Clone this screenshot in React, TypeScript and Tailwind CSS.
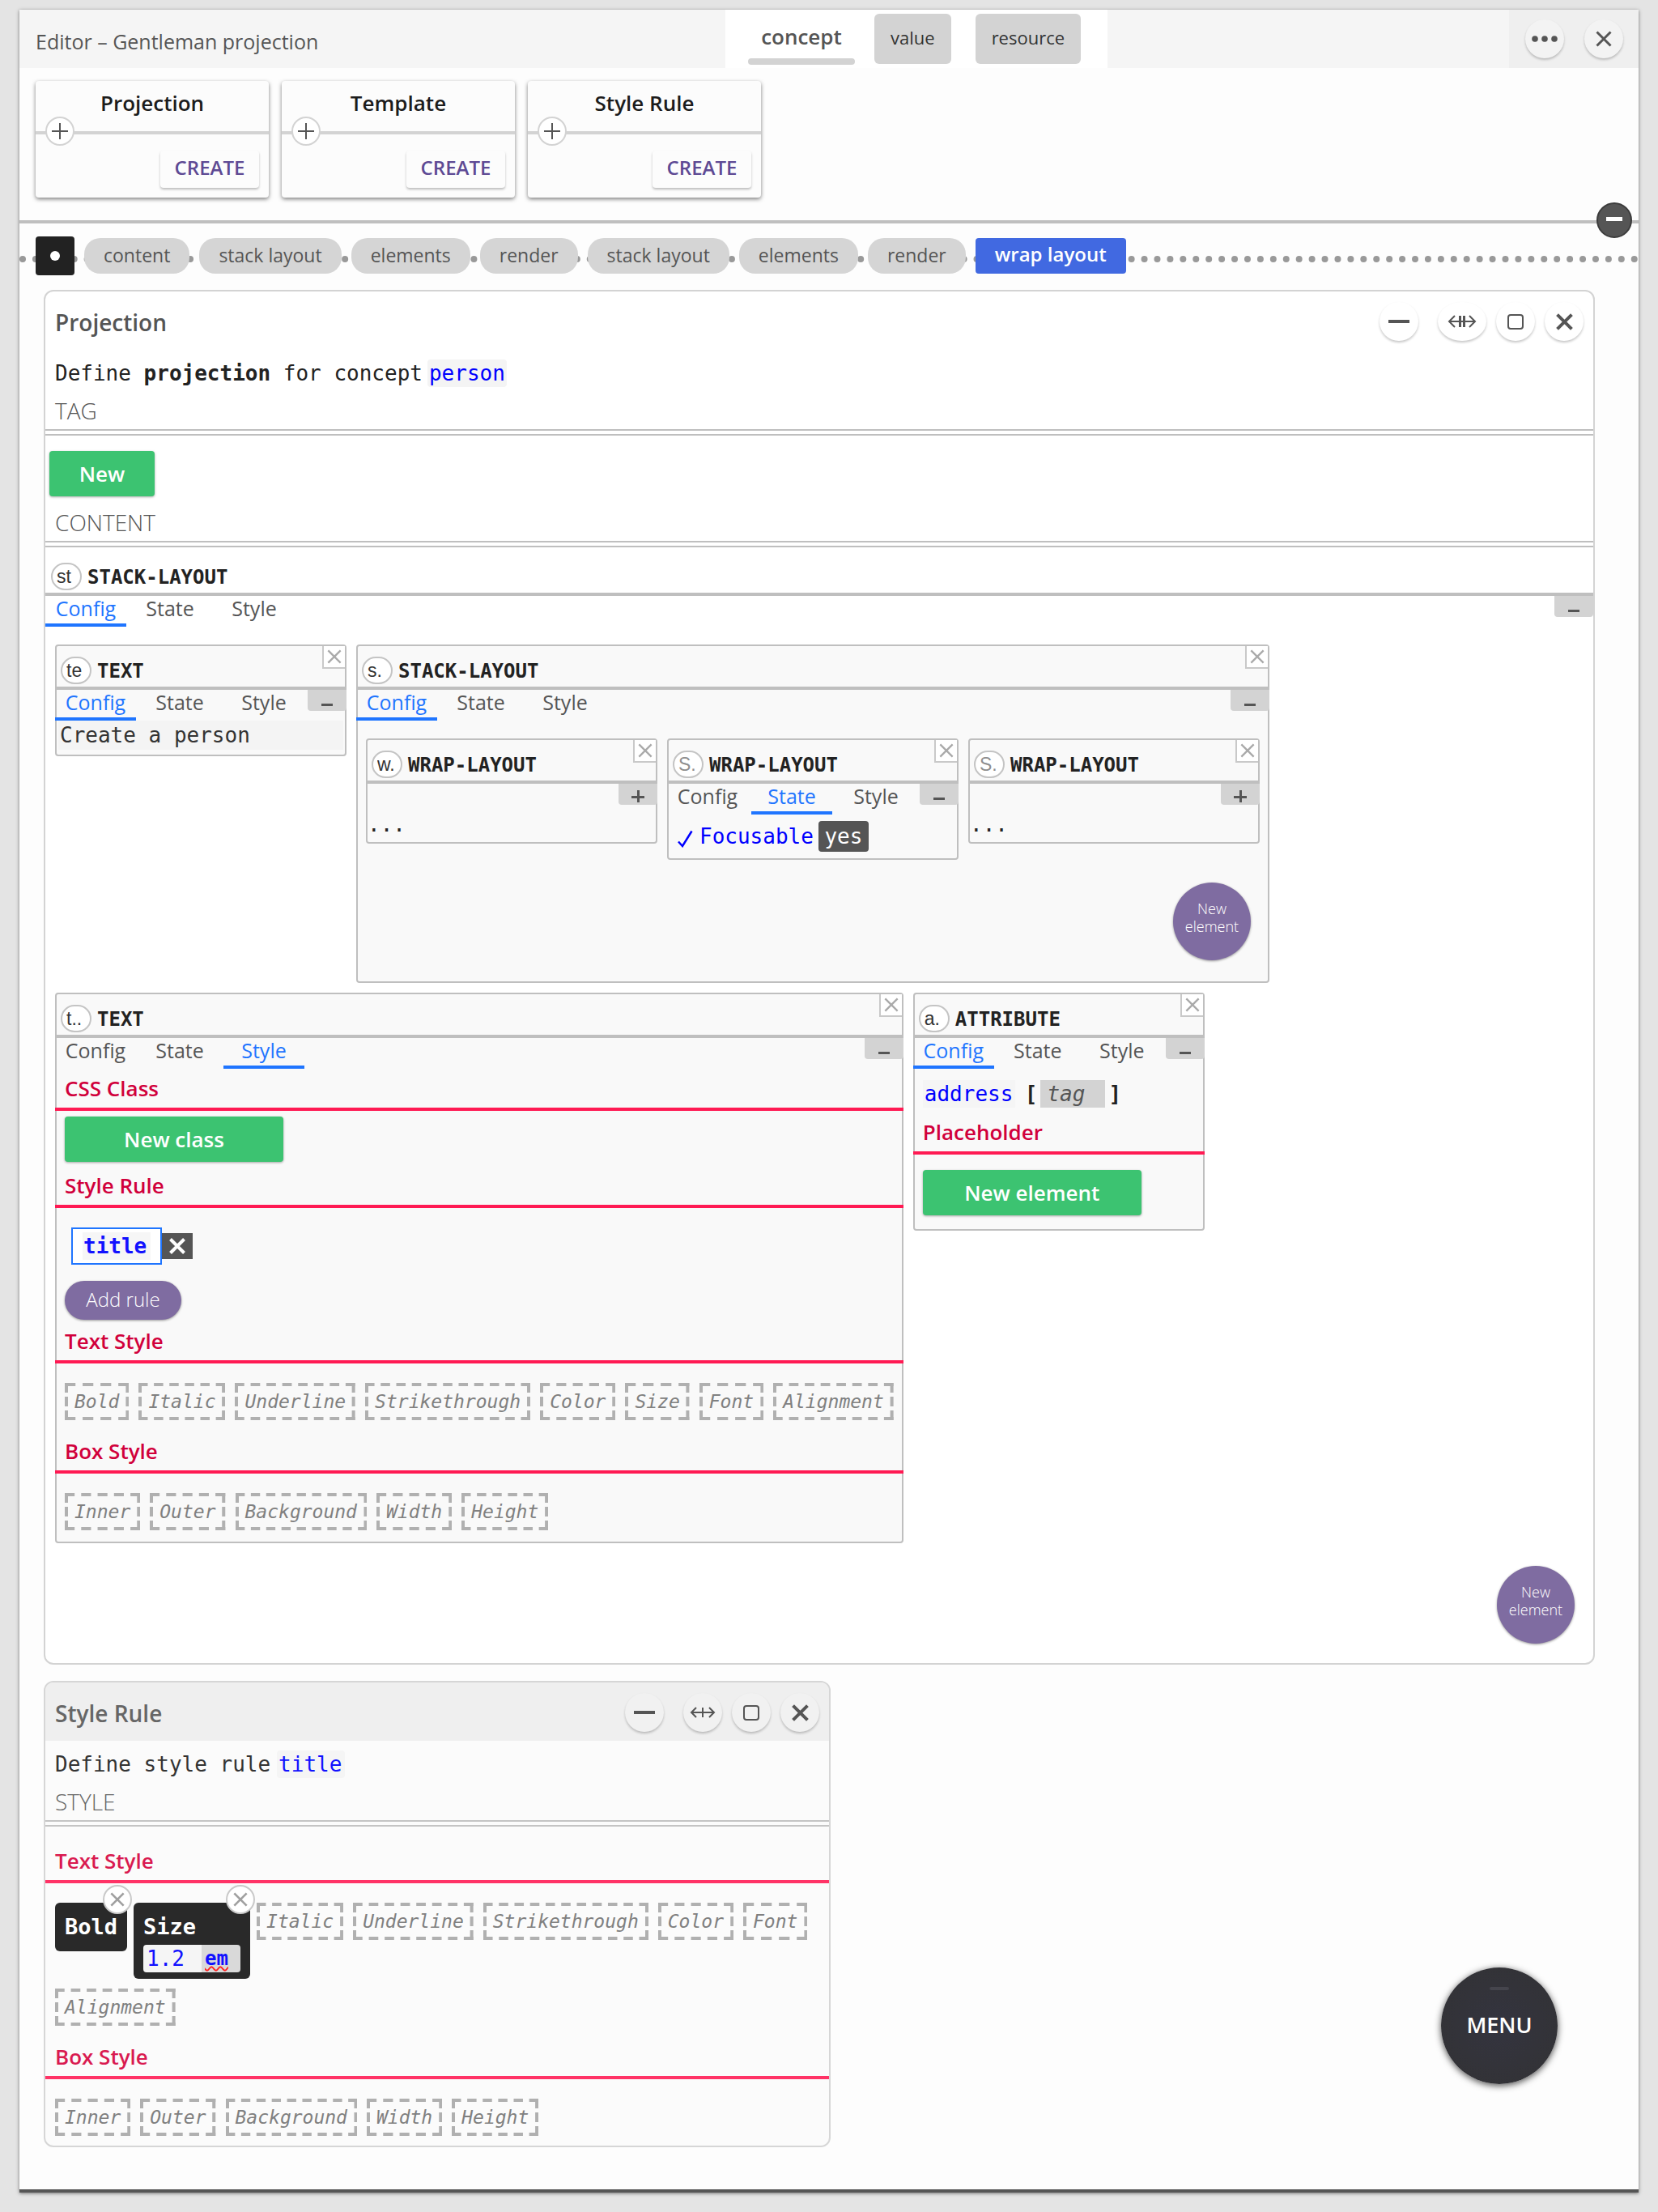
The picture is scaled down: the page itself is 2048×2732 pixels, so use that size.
import React from "react";

const mono = "font-['DejaVu_Sans_Mono','Liberation_Mono',monospace]";

type IconProps = { className?: string; width?: number };

function CrossIcon({ className = "size-5", width = 3 }: IconProps) {
  return (
    <svg viewBox="0 0 20 20" className={className} fill="none" stroke="currentColor" strokeWidth={width} aria-hidden="true">
      <path d="M1.5 1.5 18.5 18.5M18.5 1.5 1.5 18.5" />
    </svg>
  );
}

function StretchIcon({ bars }: { bars: 1 | 2 }) {
  return (
    <svg viewBox="0 0 36 18" className="h-[18px] w-9" fill="none" stroke="currentColor" strokeWidth={2} aria-hidden="true">
      <path d={bars === 2 ? "M2 9H34M9 2 2 9l7 7M27 2l7 7-7 7" : "M4 9H32M10 3 4 9l6 6M26 3l6 6-6 6"} />
      {bars === 2 ? <path strokeWidth={3} d="M15.5 2v14M20.5 2v14" /> : <path d="M18 3v12" />}
    </svg>
  );
}

function RoundButton({ label, wide, shade, children }: { label: string; wide?: boolean; shade?: string; children: React.ReactNode }) {
  return (
    <button
      aria-label={label}
      className={`flex h-12 items-center justify-center rounded-[50%] text-[#555] shadow-[0_2px_3px_rgba(0,0,0,0.22)] ${wide ? "w-[60px]" : "w-12"} ${shade ?? "bg-white"}`}
    >
      {children}
    </button>
  );
}

function WindowHeader({ title, bars, active }: { title: string; bars: 1 | 2; active?: boolean }) {
  const shade = active ? "bg-[#f1f1f1]" : undefined;
  return (
    <header className={`flex h-[72px] items-center pr-3 pl-3 ${active ? "bg-[#efefef]" : ""}`}>
      <h2 className={`flex-1 pt-1 text-[28px] font-semibold ${active ? "text-[#666]" : "text-[#555]"}`}>{title}</h2>
      <div className="flex gap-3 pt-0.5">
        <div className="mr-3">
          <RoundButton label="Minimize" shade={shade}>
            <span className="h-1 w-[26px] bg-[#555]" />
          </RoundButton>
        </div>
        <RoundButton label="Resize" wide={bars === 2} shade={shade}>
          <StretchIcon bars={bars} />
        </RoundButton>
        <RoundButton label="Maximize" shade={shade}>
          <span className="h-[19px] w-5 rounded border-2 border-[#555]" />
        </RoundButton>
        <RoundButton label="Close" shade={shade}>
          <CrossIcon className="size-[21px]" width={3.8} />
        </RoundButton>
      </div>
    </header>
  );
}

function FieldHeading({ children }: { children: React.ReactNode }) {
  return (
    <div>
      <h3 className="pl-3 text-[28px] leading-[46px] font-light text-[#555]">{children}</h3>
      <div className="h-2 border-y-2 border-[#bfbfbf]" />
    </div>
  );
}

function Badge({ text, ghost }: { text: string; ghost?: boolean }) {
  return (
    <input
      aria-label="Element name"
      defaultValue={ghost ? "" : text}
      placeholder={ghost ? text : undefined}
      className="h-[34px] w-[38px] rounded-[19px] border-2 border-[#c4c4c4] bg-white pl-[5px] font-['Liberation_Sans',Arial,sans-serif] text-[23px] text-[#333] placeholder:text-[#8f8f8f]"
    />
  );
}

type TabName = "Config" | "State" | "Style";

function Tabs({ active }: { active: TabName }) {
  return (
    <div role="tablist" className="flex gap-1">
      {(["Config", "State", "Style"] as TabName[]).map((name) => (
        <button
          key={name}
          role="tab"
          aria-selected={name === active}
          className={`h-[38px] w-[100px] border-b-4 pb-1 text-[25px] leading-[30px] ${name === active ? "border-[#1f75ff] text-[#1f75ff]" : "border-transparent text-[#555]"}`}
        >
          {name}
        </button>
      ))}
    </div>
  );
}

function ElementBar({ name, badge, ghost, closable = true }: { name: string; badge: string; ghost?: boolean; closable?: boolean }) {
  return (
    <div className={`relative flex items-end border-b-4 border-[#bfbfbf] pb-[3px] pl-[7px] ${closable ? "-mx-0.5 h-[54px]" : "h-[60px]"}`}>
      <Badge text={badge} ghost={ghost} />
      <h4 className={`${mono} pl-[7px] text-[24px] leading-[32px] font-bold text-[#222]`}>{name}</h4>
      {closable && (
        <button
          aria-label={`Remove ${name}`}
          className="absolute top-0 right-0.5 flex h-7 w-7 items-center justify-center border-b-2 border-l-2 border-[#c9c9c9] bg-white text-[#aaa]"
        >
          <CrossIcon className="size-[18px]" width={2.6} />
        </button>
      )}
    </div>
  );
}

function ElementToolbar({ active, inset = true }: { active?: TabName; inset?: boolean }) {
  return (
    <div className={`flex h-[38px] items-start justify-between ${inset ? "-mx-0.5" : ""}`}>
      {active ? <Tabs active={active} /> : <span />}
      <button
        aria-label={active ? "Collapse" : "Expand"}
        className="relative flex h-[26px] w-12 items-center justify-center rounded-b bg-[#d3d3d3]"
      >
        <span className={`h-[3px] bg-[#555] ${active ? "mt-2.5 w-3.5" : "mt-1.5 w-4"}`} />
        {!active && <span className="absolute top-2 h-[15px] w-[3px] bg-[#555]" />}
      </button>
    </div>
  );
}

function ElementCard({ name, badge, ghost, active, fit, children }: { name: string; badge: string; ghost?: boolean; active?: TabName; fit?: boolean; children: React.ReactNode }) {
  return (
    <article className={`rounded border-2 border-[#bfbfbf] bg-[#f9f9f9] ${fit ? "" : "w-[360px]"}`}>
      <ElementBar name={name} badge={badge} ghost={ghost} />
      <ElementToolbar active={active} />
      {children}
    </article>
  );
}

function Section({ title, soft, children }: { title: string; soft?: boolean; children: React.ReactNode }) {
  return (
    <section>
      <h5
        className={`h-[52px] border-b-4 pl-3 text-[26px] leading-[49px] font-semibold ${soft ? "border-[#ff3366] text-[#d91a50]" : "-mx-0.5 border-[#ff1a53] text-[#d1003b]"}`}
      >
        {title}
      </h5>
      {children}
    </section>
  );
}

/* Dashes keep a fixed length and start and end flush with each corner. */
function Chip({ children }: { children: string }) {
  const dashes = Math.round((children.length * 14 + 32) / 20);
  const span = dashes * 20 - 8;
  return (
    <button className={`${mono} relative h-[46px] px-3 text-[23px] leading-[46px] text-[#808080] italic`}>
      <svg className="absolute inset-0 size-full" stroke="#b0b0b0" strokeWidth={4} aria-hidden="true">
        <line x1="0" y1="2" x2="100%" y2="2" pathLength={span} strokeDasharray="12 8" />
        <line x1="0" y1="44" x2="100%" y2="44" pathLength={span} strokeDasharray="12 8" />
        <svg x="0" width="4" height="46">
          <line x1="2" y1="0" x2="2" y2="46" strokeDasharray="12 5" />
        </svg>
        <svg x="100%" overflow="visible">
          <line x1="-2" y1="0" x2="-2" y2="46" strokeDasharray="12 5" />
        </svg>
      </svg>
      {children}
    </button>
  );
}

function GreenButton({ wide, children }: { wide?: boolean; children: React.ReactNode }) {
  return (
    <button
      className={`h-14 rounded bg-[#3cc371] text-[26px] leading-[56px] font-semibold text-white shadow-[0_1px_3px_rgba(0,0,0,0.35)] ${wide ? "w-[270px]" : "w-[130px]"}`}
    >
      {children}
    </button>
  );
}

function NewElementCircle() {
  return (
    <button className="size-24 rounded-full bg-[#7f6ca1] px-2 pb-2.5 text-[18px] leading-[22px] font-light text-white shadow-[0_1px_3px_rgba(0,0,0,0.4)]">
      New element
    </button>
  );
}

function ToolCard({ title }: { title: string }) {
  return (
    <article className="w-72 rounded-sm bg-[#fcfcfc] shadow-[0_2px_5px_rgba(0,0,0,0.5)]">
      <div className="relative h-[66px] border-b-4 border-[#d3d3d3] text-center">
        <h3 className="text-[26px] leading-[54px] font-semibold text-[#1c1c1c]">{title}</h3>
        <button
          aria-label={`Expand ${title}`}
          className="absolute top-11 left-3 flex size-9 items-center justify-center rounded-full border-2 border-[#d3d3d3] bg-white text-[#555]"
        >
          <svg viewBox="0 0 20 20" className="size-5" stroke="currentColor" strokeWidth={2} aria-hidden="true">
            <path d="M10 0V20M0 10H20" />
          </svg>
        </button>
      </div>
      <div className="flex justify-end p-3 pt-5">
        <button className="h-[46px] w-[122px] rounded bg-[#fcfcfc] pb-1 text-[24px] leading-[42px] font-semibold text-[#5e4a94] shadow-[0_2px_3px_rgba(0,0,0,0.25)]">
          CREATE
        </button>
      </div>
    </article>
  );
}

function ActiveProperty({ name, children }: { name: string; children?: React.ReactNode }) {
  return (
    <div className="relative rounded-md bg-[#292929] px-3 pt-2 pb-2">
      <div className={`${mono} text-[27px] leading-[44px] font-bold text-white`}>{name}</div>
      {children}
      <button
        aria-label={`Remove ${name}`}
        className="absolute -top-[22px] -right-1.5 flex size-9 items-center justify-center rounded-full border-2 border-[#c9c9c9] bg-white text-[#a0a0a0]"
      >
        <CrossIcon className="size-[18px]" width={3} />
      </button>
    </div>
  );
}

const path = ["content", "stack layout", "elements", "render", "stack layout", "elements", "render"];

export default function App() {
  return (
    <div className="flex min-h-screen flex-col bg-[#e4e4e4] px-6 pt-3 pb-6 font-['Open_Sans','Noto_Sans',sans-serif] text-[#222]">
      <main className="relative flex-1 border-b-4 border-[#555] bg-[#fdfdfd] shadow-[0_1px_4px_rgba(0,0,0,0.5)]">
        <header className="flex h-[72px] bg-[#f5f5f5]">
          <h1 className="w-[872px] pl-5 text-[25px] leading-[78px] text-[#555]">Editor – Gentleman projection</h1>
          <nav className="flex w-[472px] items-center bg-white pl-7">
            <button className="relative h-[62px] w-[132px] pb-1.5 text-[26px] font-semibold text-[#555]">
              concept
              <span className="absolute inset-x-0 -bottom-px h-2 rounded bg-[#d3d3d3]" />
            </button>
            <button className="ml-6 h-[62px] rounded-md bg-[#d3d3d3] px-5 pb-1 text-[22px] text-[#333]">value</button>
            <button className="ml-[30px] h-[62px] rounded-md bg-[#d3d3d3] px-5 pb-1 text-[22px] text-[#333]">resource</button>
          </nav>
          <div className="flex-1" />
          <div className="flex w-40 items-center justify-between bg-[#efefef] pr-[19px] pl-5">
            <RoundButton label="More" shade="bg-[#f3f3f3]">
              <svg viewBox="0 0 32 8" className="h-2 w-8" fill="currentColor" aria-hidden="true">
                <circle cx="4" cy="4" r="3.8" />
                <circle cx="16" cy="4" r="3.8" />
                <circle cx="28" cy="4" r="3.8" />
              </svg>
            </RoundButton>
            <RoundButton label="Close editor" shade="bg-[#f3f3f3]">
              <CrossIcon />
            </RoundButton>
          </div>
        </header>

        <div className="relative flex h-48 gap-4 border-b-4 border-[#bfbfbf] px-5 pt-4 pb-7">
          <ToolCard title="Projection" />
          <ToolCard title="Template" />
          <ToolCard title="Style Rule" />
          <button
            aria-label="Collapse toolbar"
            className="absolute right-2 -bottom-[22px] z-10 flex size-11 items-center justify-center rounded-full border-2 border-[#3c3c3c] bg-[#555]"
          >
            <span className="mb-1 h-[5px] w-5 bg-white" />
          </button>
        </div>

        <nav aria-label="Path" className="relative flex h-20 items-center gap-3 px-5">
          <div className="absolute inset-x-0 top-10 border-t-8 border-dotted border-[#999]" />
          <button aria-label="Root" className="relative flex size-12 items-center justify-center rounded bg-[#222]">
            <span className="size-3 rounded-full bg-white" />
          </button>
          {path.map((step, i) => (
            <button key={i} className="relative h-11 rounded-[20px] bg-[#d5d5d5] px-6 pb-0.5 text-[23px] leading-[42px] text-[#555]">
              {step}
            </button>
          ))}
          <button className="relative h-11 rounded bg-[#4169e1] px-6 pb-1 text-[24px] leading-10 font-semibold text-white">wrap layout</button>
        </nav>

        <div className="pt-0.5 pr-[54px] pl-[30px]">
          <section className="rounded-xl border-2 border-[#d3d3d3] bg-white">
            <WindowHeader title="Projection" bars={2} />
            <p className={`${mono} flex items-center px-3 pt-[11px] text-[26px] leading-[36px]`}>
              <span>
                Define <b>projection</b> for concept
              </span>
              <input aria-label="Concept" defaultValue="person" className="ml-1.5 h-[34px] w-[98px] rounded-sm bg-[#f4f4f4] pl-0.5 text-[#00f]" />
            </p>
            <div className="pt-[5px]">
              <FieldHeading>TAG</FieldHeading>
            </div>
            <div className="px-[5px] pt-[19px] pb-[9px]">
              <GreenButton>New</GreenButton>
            </div>
            <FieldHeading>CONTENT</FieldHeading>
            <ElementBar name="STACK-LAYOUT" badge="st" closable={false} />
            <ElementToolbar active="Config" inset={false} />
            <div className="flex flex-wrap items-start gap-3 px-3 pt-[22px]">
              <ElementCard name="TEXT" badge="te" active="Config">
                <input
                  aria-label="Text content"
                  defaultValue="Create a person"
                  className={`${mono} mx-0.5 mb-1.5 block h-9 w-[352px] bg-[#f4f4f4] pl-0.5 text-[26px] text-[#333]`}
                />
              </ElementCard>
              <ElementCard name="STACK-LAYOUT" badge="s." active="Config" fit>
                <div className="flex items-start gap-3 px-2.5 pt-[22px]">
                  <ElementCard name="WRAP-LAYOUT" badge="w.">
                    <div className={`${mono} pb-2.5 text-[26px] leading-[24px]`}>...</div>
                  </ElementCard>
                  <ElementCard name="WRAP-LAYOUT" badge="S." ghost active="State">
                    <div className={`${mono} flex items-center py-2 pl-2.5 text-[26px] leading-[38px] text-[#00f]`}>
                      <svg viewBox="0 0 20 22" className="mt-1.5 mr-2 h-[22px] w-5" fill="none" stroke="currentColor" strokeWidth={2.5} aria-hidden="true">
                        <path d="M2 14.5 7 20 18.5 1.5" />
                      </svg>
                      Focusable
                      <button className="ml-1.5 h-[38px] w-[62px] rounded-sm bg-[#555] text-white">yes</button>
                    </div>
                  </ElementCard>
                  <ElementCard name="WRAP-LAYOUT" badge="S." ghost>
                    <div className={`${mono} pb-2.5 text-[26px] leading-[24px]`}>...</div>
                  </ElementCard>
                </div>
                <div className="flex justify-end pt-7 pr-[21px] pb-[26px]">
                  <NewElementCircle />
                </div>
              </ElementCard>
              <ElementCard name="TEXT" badge="t.." active="Style" fit>
                <Section title="CSS Class">
                  <div className="px-2.5 pt-[7px] pb-[5px]">
                    <GreenButton wide>New class</GreenButton>
                  </div>
                </Section>
                <Section title="Style Rule">
                  <div className="px-2.5 pt-6 pb-0.5">
                    <div className="flex items-center pl-2">
                      <div className="h-[46px] w-28 border-2 border-[#1f75ff] bg-white px-3 py-1">
                        <input
                          aria-label="Rule name"
                          defaultValue="title"
                          className={`${mono} h-[34px] w-[84px] bg-[#f6f6f6] pl-px text-[26px] font-bold text-[#11f]`}
                        />
                      </div>
                      <button aria-label="Remove rule" className="flex h-8 w-[38px] items-center justify-center bg-[#555] text-white">
                        <CrossIcon className="size-5" width={4} />
                      </button>
                    </div>
                    <button className="mt-5 block h-12 w-36 rounded-full bg-[#7f6ca1] pb-0.5 text-[24px] leading-[46px] font-light text-white shadow-[0_1px_3px_rgba(0,0,0,0.4)]">
                      Add rule
                    </button>
                  </div>
                </Section>
                <Section title="Text Style">
                  <div className="flex gap-3 px-2.5 pt-6 pb-3.5">
                    {["Bold", "Italic", "Underline", "Strikethrough", "Color", "Size", "Font", "Alignment"].map((t) => (
                      <Chip key={t}>{t}</Chip>
                    ))}
                  </div>
                </Section>
                <Section title="Box Style">
                  <div className="flex gap-3 px-2.5 pt-6 pb-3.5">
                    {["Inner", "Outer", "Background", "Width", "Height"].map((t) => (
                      <Chip key={t}>{t}</Chip>
                    ))}
                  </div>
                </Section>
              </ElementCard>
              <ElementCard name="ATTRIBUTE" badge="a." active="Config">
                <div className={`${mono} flex items-center px-2.5 pt-3.5 pb-1.5 text-[26px] leading-[34px]`}>
                  <input aria-label="Attribute" defaultValue="address" className="h-[34px] w-[114px] bg-[#f5f5f5] pl-0.5 text-[#00f]" />
                  <b className="pl-3">[</b>
                  <input
                    aria-label="Tag"
                    placeholder="tag"
                    className="mx-1 h-[34px] w-20 bg-[#d3d3d3] pl-2 italic placeholder:text-[#555]"
                  />
                  <b>]</b>
                </div>
                <Section title="Placeholder">
                  <div className="px-2.5 pt-[19px] pb-[17px]">
                    <GreenButton wide>New element</GreenButton>
                  </div>
                </Section>
              </ElementCard>
            </div>
            <div className="flex justify-end pt-7 pr-[23px] pb-6">
              <NewElementCircle />
            </div>
          </section>

          <section className="mt-5 w-[972px] overflow-hidden rounded-xl border-2 border-[#d6d6d6] bg-[#fbfbfb]">
            <WindowHeader title="Style Rule" bars={1} active />
            <p className={`${mono} flex items-center px-3 pt-[11px] text-[26px] leading-[36px] text-[#333]`}>
              Define style rule
              <input aria-label="Style rule name" defaultValue="title" className="ml-2 h-[34px] w-[84px] rounded-sm bg-[#f5f5f5] pl-0.5 text-[#11f]" />
            </p>
            <div className="pt-[5px] pb-[18px] opacity-90">
              <FieldHeading>STYLE</FieldHeading>
            </div>
            <Section title="Text Style" soft>
              <div className="flex flex-wrap items-start gap-3 px-3 pt-6 pb-3.5">
                <div className="-mr-1 flex items-start gap-2">
                  <ActiveProperty name="Bold" />
                  <ActiveProperty name="Size">
                    <div className={`${mono} flex overflow-hidden rounded text-[26px] text-[#11f]`}>
                      <input aria-label="Size value" defaultValue="1.2" className="h-[34px] w-[72px] bg-[#f5f5f5] pl-1" />
                      <input
                        aria-label="Size unit"
                        defaultValue="em"
                        className="h-[34px] w-12 bg-[#d9d9d9] pl-1 text-[24px] font-bold underline decoration-[#f22] decoration-wavy decoration-2"
                      />
                    </div>
                  </ActiveProperty>
                </div>
                {["Italic", "Underline", "Strikethrough", "Color", "Font", "Alignment"].map((t) => (
                  <Chip key={t}>{t}</Chip>
                ))}
              </div>
            </Section>
            <Section title="Box Style" soft>
              <div className="flex gap-3 px-3 pt-6 pb-3">
                {["Inner", "Outer", "Background", "Width", "Height"].map((t) => (
                  <Chip key={t}>{t}</Chip>
                ))}
              </div>
            </Section>
          </section>
        </div>

        <button className="absolute right-[100px] bottom-[130px] size-36 rounded-full bg-[radial-gradient(circle,#34343f,#323234)] pb-0.5 text-[27px] font-semibold text-white shadow-[0_2px_8px_rgba(0,0,0,0.7)]">
          <span className="absolute top-6 left-[60px] h-1 w-6 rounded bg-[#45454d]" />
          MENU
        </button>
      </main>
    </div>
  );
}
